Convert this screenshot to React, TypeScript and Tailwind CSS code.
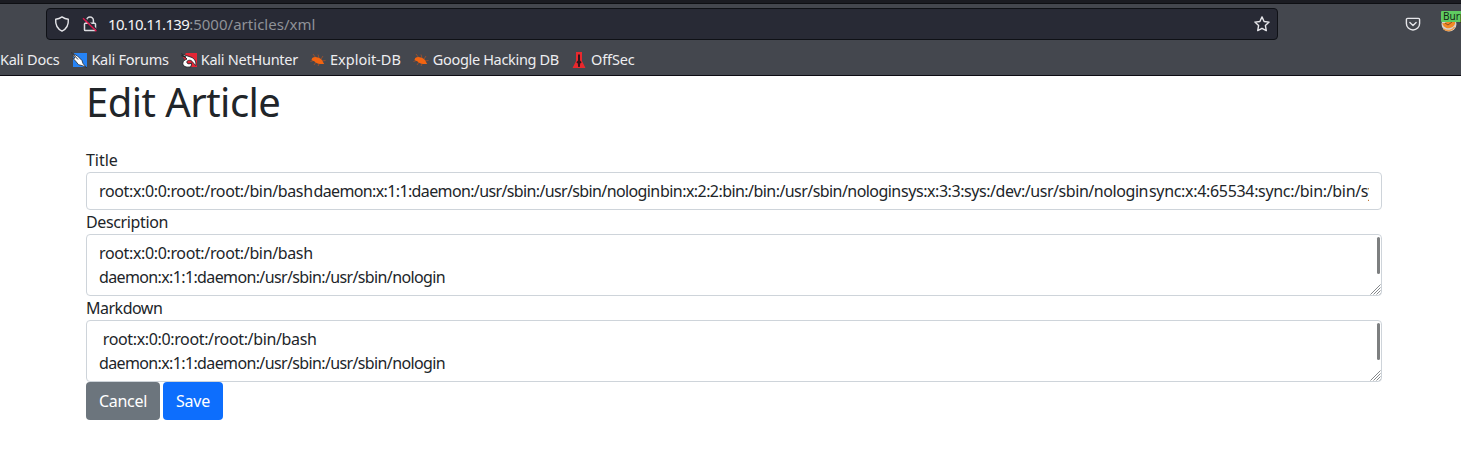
import React from "react";

const ROOT_ENTRY = "root:x:0:0:root:/root:/bin/bash";
const DAEMON_ENTRY = "daemon:x:1:1:daemon:/usr/sbin:/usr/sbin/nologin";

function ShieldIcon() {
  return (
    <svg className="h-4 w-4" viewBox="0 0 16 16" fill="none" stroke="#e6e6ea" strokeWidth="1.4" strokeLinejoin="round">
      <path d="M8 .9C10 2.300 12 3 14.300 3.300c.4 5.300-1.300 9.500-6.300 11.800C3 12.800 1.300 8.600 1.700 3.300 4 3 6 2.300 8 .9z" />
    </svg>
  );
}

function InsecureIcon() {
  return (
    <svg className="h-4 w-4" viewBox="0 0 16 16" fill="none">
      <path d="M4.600 7V4.500a3.400 3.400 0 0 1 6.800 0V7M3.300 7.300h9.400a.8.8 0 0 1 .8.8v5.600a.8.8 0 0 1-.8.8H3.300a.8.8 0 0 1-.8-.8V8.100a.8.8 0 0 1 .8-.8z" stroke="#dcdce0" strokeWidth="1.5" />
      <path d="M1.800 1.200 15.200 14.300" stroke="#282a35" strokeWidth="1.5" />
      <path d="M1 2.200 14.400 15.300" stroke="#e3164c" strokeWidth="1.4" />
    </svg>
  );
}

function StarIcon() {
  return (
    <svg className="h-4 w-4" viewBox="0 0 16 16" fill="none" stroke="#e6e6ea" strokeWidth="1.4" strokeLinejoin="round">
      <path d="m8 .9 2.100 4.600 5 .6-3.700 3.500.9 5L8 12.300l-4.300 2.300.9-5L.9 6.100l5-.6z" />
    </svg>
  );
}

function PocketIcon() {
  return (
    <svg className="h-4 w-4" viewBox="0 0 16 16" fill="none" stroke="#e6e6ea" strokeWidth="1.4" strokeLinecap="round" strokeLinejoin="round">
      <path d="M2.600 2.400h10.800a1.200 1.200 0 0 1 1.200 1.200v3.800a6.600 6.600 0 0 1-13.200 0V3.600a1.200 1.200 0 0 1 1.200-1.200z" />
      <path d="m4.900 6.400 3.100 3 3.100-3" />
    </svg>
  );
}

function ForumsIcon() {
  return (
    <svg className="h-4 w-4" viewBox="0 0 16 16">
      <path d="M3 1h13v14H2V6z" fill="#2683f5" />
      <path d="M0 .5 6.500 4l4.500 4.500 1 3 3.500 4-4-1.800-4-1L4.500 9 2 6.500 4 6z" fill="#fff" stroke="#22252b" strokeWidth=".8" />
      <path d="m1.500 1.500 5.500 6" stroke="#22252b" strokeWidth=".9" />
    </svg>
  );
}

function NetHunterIcon() {
  return (
    <svg className="h-4 w-4" viewBox="0 0 16 16">
      <path d="M5 1h11v14H8L2 5z" fill="#e52535" />
      <path d="M.5 2 6 3.800l5 1.700c3.500 2 4 5 4 8l-2.500-2.200C11 8.500 9 7.500 6.500 8.800c-1.400 1.500-.6 2.900 1.500 3.100l2.600-.8-.6 3.600c-4.500 1.300-8.200-.3-8.200-3.400C1.800 8.900 4 8 6 7z" fill="#fff" stroke="#1f2227" strokeWidth=".9" />
      <path d="m.5 3.500 4.500 1.700" stroke="#1f2227" strokeWidth="1.300" />
    </svg>
  );
}

function BugIcon() {
  return (
    <svg className="h-4 w-4" viewBox="0 0 16 16">
      <path d="m3 2 3 4M8 2.500l1 3.500M.5 9.500 5 8M4 13l2-3M8 14l1-2M13 4l-2 3M12 9l3.500-.5" stroke="#b65324" strokeWidth=".7" fill="none" />
      <path d="M2.200 6C4 4.700 6 4.800 8 5.600c2.500.7 4.500 2.300 5 4.400l1.200 2-2.600-.1c-2.600.6-5.400-.3-7-2.300L1.500 8z" fill="#f26411" />
    </svg>
  );
}

function OffSecIcon() {
  return (
    <svg className="h-4 w-4" viewBox="0 0 16 16">
      <path d="M5 0h6v9l3.500 7h-13L5 9z" fill="#e9282d" />
      <path d="M7 2.500h2v6l1.700 1.700-1.500 1.300L8.800 15H7.200l-.4-3.500-1.500-1.300L7 8.500z" fill="#30171d" />
    </svg>
  );
}

function FoxyIcon() {
  return (
    <svg className="h-4 w-4" viewBox="0 0 16 16">
      <circle cx="8" cy="8" r="7.500" fill="#d8d2cb" />
      <path d="M1 7c2 1 4-1 7-2l6-1c1 4-1 7-5 8-3 .6-6 0-8-5z" fill="#f28a25" />
      <path d="m4 7 3 2 4-3" stroke="#8b4d24" strokeWidth="1" fill="none" />
      <path d="M2.500 13c4 2.800 9 1.500 11-2" stroke="#ed9845" strokeWidth="1.400" fill="none" />
    </svg>
  );
}

function Bookmark({ icon, label, className }: { icon?: React.ReactNode; label: string; className: string }) {
  return (
    <div className="flex shrink-0 items-center gap-1">
      {icon}
      <span className={"whitespace-nowrap " + className}>{label}</span>
    </div>
  );
}

function TextArea({ indent = "" }: { indent?: string }) {
  return (
    <div className="relative h-[62px] overflow-hidden rounded border border-[#ced4da] bg-white px-3 py-1.5 leading-6 whitespace-pre">
      <div className="tracking-[-0.36px]">{indent + ROOT_ENTRY}</div>
      <div className="tracking-[-0.63px]">{DAEMON_ENTRY}</div>
      <span className="absolute top-[2px] right-[1px] h-[37px] w-[3px] rounded-full bg-[#7d7f80]" />
      <svg className="absolute right-0 bottom-0 h-[11px] w-[11px]" viewBox="0 0 11 11" stroke="#777b7e" strokeWidth=".9">
        <path d="M.5 10.500l10-10M3.500 10.500l7-7M6.500 10.500l4-4M9.500 10.500l1-1" />
      </svg>
    </div>
  );
}

export default function App() {
  return (
    <div className="h-[457px] w-full overflow-hidden bg-white font-['Noto_Sans',sans-serif] text-base text-[#212529]">
      <header className="h-[76px] border-b border-[#0c0b12] bg-[#44474e]">
        <div className="h-1 border-b border-[#0e0f13] bg-[#1b1c22]" />
        <div className="flex h-10 items-center">
          <div className="ml-[46px] flex h-8 w-[1232px] shrink-0 items-center rounded border border-[#0f1116] bg-[#282a35] px-[7px]">
            <ShieldIcon />
            <span className="ml-3"><InsecureIcon /></span>
            <span className="ml-[10px] flex-1 text-[15px] whitespace-nowrap text-[#8f9298]">
              <span className="tracking-[-0.68px] text-[#f4f4f6]">10.10.11.139</span>
              <span className="tracking-[0.02px]">:5000/articles/xml</span>
            </span>
            <StarIcon />
          </div>
          <span className="ml-[127px]"><PocketIcon /></span>
          <div className="relative ml-5 shrink-0">
            <FoxyIcon />
            <span className="absolute top-[-5px] left-0 h-[11px] w-[30px] rounded-[1px] bg-[#5fcb61] pl-[2px] text-[10px] leading-[11px] text-[#142716]">Burp</span>
          </div>
        </div>
        <nav className="flex h-[31px] items-center gap-3 text-[14.5px] text-[#ededf0]">
          <Bookmark label="Kali Docs" className="tracking-[-0.25px]" />
          <Bookmark icon={<ForumsIcon />} label="Kali Forums" className="tracking-[-0.25px]" />
          <Bookmark icon={<NetHunterIcon />} label="Kali NetHunter" className="tracking-[-0.26px]" />
          <Bookmark icon={<BugIcon />} label="Exploit-DB" className="tracking-[0px]" />
          <Bookmark icon={<BugIcon />} label="Google Hacking DB" className="tracking-[-0.33px]" />
          <Bookmark icon={<OffSecIcon />} label="OffSec" className="tracking-[-0.1px]" />
        </nav>
      </header>
      <main className="mr-[79px] ml-[86px] pt-[2px]">
        <h1 className="mb-[22px] h-12 text-[40px] leading-[48px] tracking-[-0.55px]">Edit Article</h1>
        <label className="block h-6 leading-6 tracking-[-0.05px]">Title</label>
        <div className="h-[38px] rounded border border-[#ced4da] bg-white px-3 py-1.5">
          <div className="flex h-6 overflow-hidden leading-6 whitespace-nowrap">
            <span className="w-[214.5px] shrink-0 tracking-[-0.36px]">{ROOT_ENTRY}</span>
            <span className="w-[346.5px] shrink-0 tracking-[-0.63px]">{DAEMON_ENTRY}</span>
            <span className="w-[241px] shrink-0 tracking-[-0.56px]">bin:x:2:2:bin:/bin:/usr/sbin/nologin</span>
            <span className="w-[248px] shrink-0 tracking-[-0.44px]">sys:x:3:3:sys:/dev:/usr/sbin/nologin</span>
            <span className="shrink-0 tracking-[-0.32px]">sync:x:4:65534:sync:/bin:/bin/sync</span>
          </div>
        </div>
        <label className="block h-6 leading-6 tracking-[-0.36px]">Description</label>
        <TextArea />
        <label className="block h-6 leading-6 tracking-[-0.5px]">Markdown</label>
        <TextArea indent=" " />
        <div className="flex gap-[3px] tracking-[-0.27px] text-white">
          <button className="h-[38px] w-[74px] rounded bg-[#6c757d]">Cancel</button>
          <button className="h-[38px] w-[60px] rounded bg-[#0d6efd]">Save</button>
        </div>
      </main>
    </div>
  );
}
